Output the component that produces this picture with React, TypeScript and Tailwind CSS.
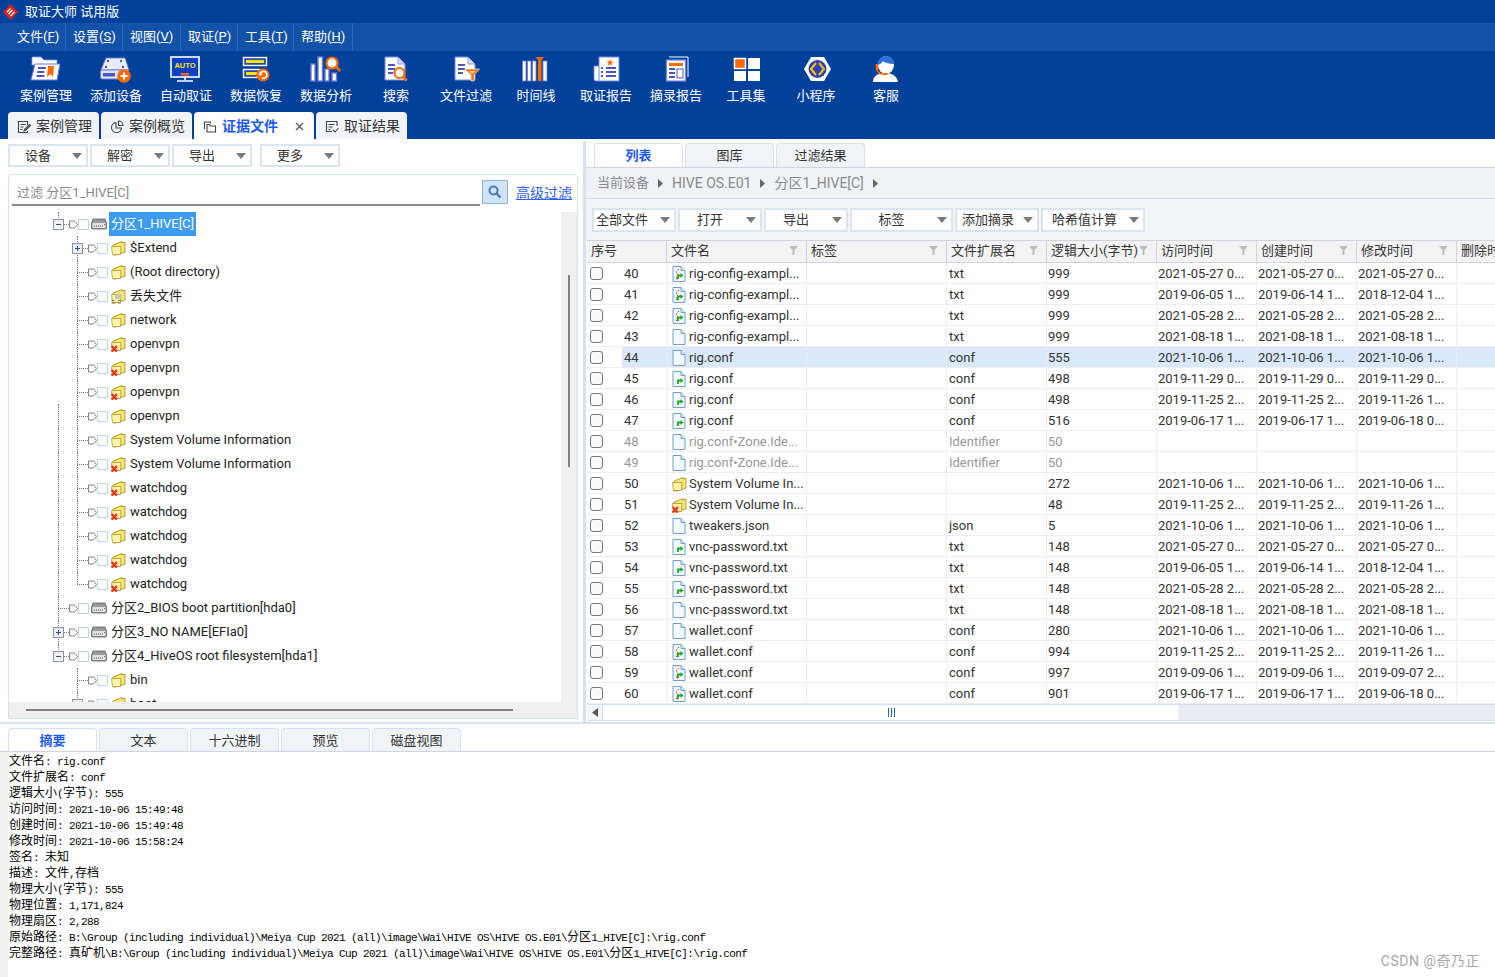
import React from "react";

const INDIGO = "#4a58bd";
const ORANGE = "#ff6a00";

const IconCase = () => (
  <svg width="32" height="28" viewBox="0 0 32 28">
    <path d="M2 2h9l3 3h13v5H2z" fill="#fff" stroke="#8f9be0" strokeWidth="0.8" />
    <path d="M5 9h25l-3 16H1z" fill="#fff" stroke="#6d7bd6" strokeWidth="1" />
    <path d="M8 13h8M7.3 17h7M6.5 21h8" stroke={INDIGO} strokeWidth="2" />
    <path d="M18 11h6l-1 11-2.500-3-3.500 3z" fill={ORANGE} />
  </svg>
);

const IconAdd = () => (
  <svg width="32" height="28" viewBox="0 0 32 28">
    <path d="M6 3h19l4 12H1z" fill="#e9ecfb" stroke="#6d7bd6" strokeWidth="0.8" />
    <g fill={INDIGO}>
      <circle cx="8" cy="6" r="1.200" />
      <circle cx="21" cy="6" r="1.200" />
      <circle cx="6" cy="12" r="1.200" />
      <circle cx="23" cy="12" r="1.200" />
    </g>
    <rect x="0.500" y="15" width="28" height="9" rx="1.500" fill="#dfe3f8" stroke="#6d7bd6" />
    <rect x="3" y="18" width="12" height="3.500" fill={INDIGO} />
    <circle cx="24" cy="21" r="6.800" fill={ORANGE} />
    <path d="M24 17.500v7M20.500 21h7" stroke="#fff" strokeWidth="2" />
  </svg>
);

const IconAuto = () => (
  <svg width="32" height="28" viewBox="0 0 32 28">
    <rect x="1" y="2" width="28" height="20" fill="#0a3fc8" stroke="#fff" strokeWidth="1.600" />
    <text x="15" y="12.500" textAnchor="middle" fontSize="7.500" fontWeight="700" fill="#ffe600" fontFamily="Liberation Sans, sans-serif">AUTO</text>
    <rect x="11" y="18" width="8" height="2.500" fill={ORANGE} />
    <path d="M15 22v3M7 26h16" stroke="#fff" strokeWidth="1.600" />
  </svg>
);

const IconRecover = () => (
  <svg width="32" height="28" viewBox="0 0 32 28">
    <rect x="3.500" y="2.500" width="23" height="8" fill="#2d49b8" stroke="#fff" strokeWidth="1.400" />
    <rect x="6" y="5" width="18" height="3" fill="#ffe600" />
    <rect x="3.500" y="14.500" width="16" height="8" fill="#2d49b8" stroke="#fff" strokeWidth="1.400" />
    <rect x="6" y="17" width="11" height="3" fill="#ffe600" />
    <circle cx="23" cy="20" r="6.500" fill={ORANGE} />
    <path d="M20 19a3.500 3.500 0 1 1 2 4" fill="none" stroke="#fff" strokeWidth="1.800" />
    <path d="M18 18.500h4.500l-2 2.500z" fill="#fff" />
  </svg>
);

const IconAnalysis = () => (
  <svg width="32" height="28" viewBox="0 0 32 28">
    <g fill="#fff" stroke="#6d7bd6" strokeWidth="1.400">
      <rect x="1" y="9" width="4" height="17" />
      <rect x="8" y="2" width="4.500" height="24" />
      <rect x="15" y="14" width="4" height="12" />
      <rect x="22" y="18" width="4.500" height="8" />
    </g>
    <circle cx="22" cy="8" r="5.500" fill="#fff" stroke={ORANGE} strokeWidth="2.200" />
    <path d="M26 12l4.500 4" stroke={ORANGE} strokeWidth="2.400" />
  </svg>
);

const DocBase = () => (
  <>
    <path d="M5 2h13l7 7v16H5z" fill="#fff" stroke="#7a87dc" strokeWidth="1" />
    <path d="M18 2v7h7" fill="#d7dbf6" stroke="#7a87dc" strokeWidth="0.800" />
    <path d="M8 10h7M8 14h7M8 18h5" stroke={INDIGO} strokeWidth="1.800" />
  </>
);

const IconSearch = () => (
  <svg width="32" height="28" viewBox="0 0 32 28">
    <DocBase />
    <circle cx="19.500" cy="18" r="5" fill="#fff" stroke={ORANGE} strokeWidth="2.200" />
    <path d="M23 22l4 3.500" stroke={ORANGE} strokeWidth="2.400" />
  </svg>
);

const IconFilter = () => (
  <svg width="32" height="28" viewBox="0 0 32 28">
    <DocBase />
    <path d="M14.500 14h15l-5.500 6v6h-3v-6z" fill={ORANGE} stroke="#fff" strokeWidth="0.600" />
    <path d="M18.500 16h7l-3.500 3z" fill="#ffd9a8" />
  </svg>
);

const IconTimeline = () => (
  <svg width="32" height="28" viewBox="0 0 32 28">
    <g fill="#fff" stroke="#6d7bd6" strokeWidth="0.800">
      <rect x="2.500" y="6" width="3.500" height="20" />
      <rect x="7.500" y="6" width="3.500" height="20" />
      <rect x="12.500" y="6" width="3.500" height="20" />
      <rect x="23" y="6" width="4" height="20" />
    </g>
    <rect x="18" y="6" width="3.500" height="20" fill={ORANGE} />
    <path d="M15.500 2h8.500l-4.200 5z" fill={ORANGE} />
  </svg>
);

const IconReport = () => (
  <svg width="32" height="28" viewBox="0 0 32 28">
    <path d="M4 11h6v15H6a2 2 0 0 1-2-2z" fill="#fff" stroke="#7a87dc" strokeWidth="0.800" />
    <rect x="9" y="2" width="20" height="24" fill="#fff" stroke="#7a87dc" />
    <path d="M20 4l1 2.500h2.500l-2 1.700.8 2.600-2.300-1.500-2.300 1.500.8-2.600-2-1.700H19z" fill={ORANGE} />
    <path d="M16 13h10M16 17h10M16 21h10M11 13h2M11 17h2M11 21h2" stroke={INDIGO} strokeWidth="1.800" />
  </svg>
);

const IconExcerpt = () => (
  <svg width="32" height="28" viewBox="0 0 32 28">
    <path d="M9 2h19v20" fill="none" stroke="#fff" strokeWidth="1" />
    <rect x="6.500" y="5" width="19" height="21" fill="#fff" stroke="#7a87dc" strokeWidth="1.200" />
    <rect x="9" y="8" width="14" height="3" fill={ORANGE} />
    <path d="M9 14h6M9 18h6M9 22h6" stroke={INDIGO} strokeWidth="1.800" />
    <rect x="17" y="14" width="6" height="9" fill="#fff" stroke={INDIGO} strokeWidth="1" />
  </svg>
);

const IconTools = () => (
  <svg width="32" height="28" viewBox="0 0 32 28">
    <rect x="4.500" y="3.500" width="11" height="10" fill={ORANGE} stroke="#fff" strokeWidth="1.500" />
    <rect x="18" y="3" width="12" height="11" fill="#fff" />
    <rect x="4" y="16" width="12" height="10" fill="#fff" />
    <rect x="18" y="16" width="12" height="10" fill="#fff" />
  </svg>
);

const IconMini = () => (
  <svg width="32" height="28" viewBox="0 0 32 28">
    <path d="M11 2h13l7 12-7 12H11L4 14z" fill="#fff" />
    <circle cx="17.500" cy="14" r="9" fill="#2f3fb5" />
    <path d="M16 8l-5 6 5 6M19 8l5 6-5 6" fill="none" stroke="#ffc400" strokeWidth="2" />
  </svg>
);

const IconSupport = () => (
  <svg width="32" height="28" viewBox="0 0 32 28">
    <path d="M3 27c0-6 5-9 12-9s12 3 13 9z" fill="#fff" />
    <ellipse cx="16" cy="10" rx="8" ry="9" fill="#fff" />
    <path d="M8 10c0-6 4-9 8-9s8 3 8 8c-4 0-9-1-11-3-1 2-3 3-5 4z" fill="#2f6fd8" />
    <path d="M7 9v6" stroke={ORANGE} strokeWidth="2.600" />
    <path d="M7 15c1 3 3 4 7 4" fill="none" stroke={ORANGE} strokeWidth="1.500" />
    <ellipse cx="15.500" cy="19" rx="2.500" ry="1.200" fill={ORANGE} />
  </svg>
);

const tools: [string, React.FC][] = [
  ["案例管理", IconCase],
  ["添加设备", IconAdd],
  ["自动取证", IconAuto],
  ["数据恢复", IconRecover],
  ["数据分析", IconAnalysis],
  ["搜索", IconSearch],
  ["文件过滤", IconFilter],
  ["时间线", IconTimeline],
  ["取证报告", IconReport],
  ["摘录报告", IconExcerpt],
  ["工具集", IconTools],
  ["小程序", IconMini],
  ["客服", IconSupport],
];

const menus: [string, string, string][] = [
  ["文件", "F", "w-[66px] pl-[17px]"],
  ["设置", "S", "w-[57px] pl-[7px]"],
  ["视图", "V", "w-[58px] pl-[7px]"],
  ["取证", "P", "w-[57px] pl-[7px]"],
  ["工具", "T", "w-[56px] pl-[7px]"],
  ["帮助", "H", "w-[59px] pl-[7px]"],
];

const Caret = () => (
  <svg width="10" height="6" viewBox="0 0 10 6" className="shrink-0">
    <path d="M0 0h10L5 6z" fill="#7a7a7a" />
  </svg>
);

const DropButton = ({ label, w, h = "h-[24px]", textClass = "pr-[6px] text-center" }: { label: string; w: string; h?: string; textClass?: string }) => (
  <div className={`flex items-center ${w} ${h} shrink-0 border-2 border-[#dbe4f1] bg-white pr-[4px] text-[#333]`}>
    <span className={`flex-1 ${textClass}`}>{label}</span>
    <Caret />
  </div>
);

const Folder = ({ kind = "folder" }: { kind?: string }) => (
  <svg width="16" height="16" viewBox="0 0 16 16" className="shrink-0">
    <path d="M3 5l9-3.500v1.500l3-1v10l-9 3H3z" fill="#f7e676" stroke="#a88a1e" strokeWidth="0.800" />
    <path d="M1.500 6.500h9.500L10.500 14.500H2.500z" fill="#fff3a6" stroke="#b4942a" strokeWidth="0.800" />
    {kind === "del" && <path d="M1.500 10l5.500 5.500M7 10l-5.500 5.500" stroke="#e53a24" strokeWidth="2.400" />}
    {kind === "lost" && (
      <>
        <path d="M5 6h6v5H5z" fill="#c9c9b8" />
        <path d="M1.500 12.500h3M1.500 15h3M8 15h3M8 12.500h3" stroke="#777" strokeWidth="1.200" />
      </>
    )}
  </svg>
);

const Disk = () => (
  <svg width="16" height="12" viewBox="0 0 16 12" className="shrink-0">
    <path d="M2 1h12l1.500 4v5a1 1 0 0 1-1 1h-13a1 1 0 0 1-1-1V5z" fill="#9a9a9a" stroke="#5c5c5c" strokeWidth="0.800" />
    <rect x="1.500" y="5" width="13" height="5" fill="#e3e3e3" />
    <path d="M3 8h1M5 8h1M7 8h1M9 8h1M11 8h1" stroke="#444" strokeWidth="1" />
    <rect x="13" y="6" width="1" height="1" fill="#2d9c2d" />
  </svg>
);

const Expander = ({ sign }: { sign: "+" | "-" }) => (
  <svg width="11" height="11" viewBox="0 0 11 11" className="relative shrink-0">
    <rect x="0.500" y="0.500" width="10" height="10" fill="#eef1f6" stroke="#8c93a3" />
    <path d={sign === "+" ? "M3 5.500h5M5.500 3v5" : "M3 5.500h5"} stroke={sign === "+" ? "#2b4ea8" : "#4a5161"} />
  </svg>
);

const Tag = () => (
  <svg width="9" height="9" viewBox="0 0 9 9" className="shrink-0">
    <path d="M0.500 1h5l3 3.500-3 3.500h-5z" fill="#fff" stroke="#808080" />
  </svg>
);

type TreeItem = {
  level: 1 | 2;
  text: string;
  sign?: "+" | "-";
  kind?: string;
  selected?: boolean;
  a?: "full" | "top";
  b?: "full" | "top";
};

const treeItems: TreeItem[] = [
  { level: 1, text: "分区1_HIVE[C]", sign: "-", selected: true, a: "top" },
  { level: 2, text: "$Extend", sign: "+", kind: "folder", b: "full" },
  { level: 2, text: "(Root directory)", kind: "folder", b: "full" },
  { level: 2, text: "丢失文件", kind: "lost", b: "full" },
  { level: 2, text: "network", kind: "folder", b: "full" },
  { level: 2, text: "openvpn", kind: "del", b: "full" },
  { level: 2, text: "openvpn", kind: "del", b: "full" },
  { level: 2, text: "openvpn", kind: "del", b: "full" },
  { level: 2, text: "openvpn", kind: "folder", a: "full", b: "full" },
  { level: 2, text: "System Volume Information", kind: "folder", a: "full", b: "full" },
  { level: 2, text: "System Volume Information", kind: "del", a: "full", b: "full" },
  { level: 2, text: "watchdog", kind: "del", a: "full", b: "full" },
  { level: 2, text: "watchdog", kind: "del", a: "full", b: "full" },
  { level: 2, text: "watchdog", kind: "folder", a: "full", b: "full" },
  { level: 2, text: "watchdog", kind: "del", a: "full", b: "full" },
  { level: 2, text: "watchdog", kind: "del", a: "full", b: "top" },
  { level: 1, text: "分区2_BIOS boot partition[hda0]", a: "full" },
  { level: 1, text: "分区3_NO NAME[EFIa0]", sign: "+", a: "full" },
  { level: 1, text: "分区4_HiveOS root filesystem[hda1]", sign: "-", a: "top" },
  { level: 2, text: "bin", kind: "folder", b: "full" },
  { level: 2, text: "boot", sign: "+", kind: "folder", b: "full" },
];

const Guide = ({ left, mode }: { left: string; mode: "full" | "top" }) => (
  <span className={`absolute top-0 ${left} ${mode === "full" ? "h-full" : "h-1/2"} border-l border-dotted border-[#777]`} />
);

const TreeRow = ({ item }: { item: TreeItem }) => (
  <div className={`relative flex h-6 shrink-0 items-center ${item.level === 1 ? "pl-[44px]" : "pl-[63px]"}`}>
    {item.a && <Guide left="left-[49px]" mode={item.a} />}
    {item.b && <Guide left="left-[68px]" mode={item.b} />}
    {item.sign ? (
      <>
        <Expander sign={item.sign} />
        <span className="w-[5px] border-t border-dotted border-[#777]" />
      </>
    ) : (
      <span className="ml-[5px] w-[11px] border-t border-dotted border-[#777]" />
    )}
    <Tag />
    <span className="h-[11px] w-[11px] shrink-0 border border-[#bcd0f5] bg-white" />
    <span className="ml-[2px] flex w-[16px] justify-center">{item.level === 1 ? <Disk /> : <Folder kind={item.kind} />}</span>
    {item.selected ? (
      <span className="ml-[2px] flex h-6 items-center bg-[#3d9bf2] px-[2px] text-white">{item.text}</span>
    ) : (
      <span className="ml-[4px] text-[#222]">{item.text}</span>
    )}
  </div>
);

const FileIcon = ({ kind }: { kind: string }) => {
  if (kind === "folder" || kind === "del") {
    return (
      <span className="-mx-px flex shrink-0">
        <Folder kind={kind} />
      </span>
    );
  }
  return (
    <svg width="14" height="16" viewBox="0 0 14 16" className="shrink-0">
      <path d="M1 0.500h8l4 4v11H1z" fill="#f4f9ff" stroke="#6f9fcf" />
      <path d="M9 0.500v4h4" fill="#d6e6f7" stroke="#6f9fcf" />
      {kind === "rg" && <path d="M7 3L4 6l2 3-2 3 2 2" fill="none" stroke="#e5352b" strokeWidth="1" strokeDasharray="1.500 0.800" />}
      {(kind === "g" || kind === "rg") && (
        <>
          <path d="M6 13V9.500h3" fill="none" stroke="#1fa81f" strokeWidth="1.800" />
          <path d="M8.500 7l3 2.500-3 2.500z" fill="#1fa81f" />
        </>
      )}
    </svg>
  );
};

type Row = [number, string, string, string, string, string, string, string, boolean?];

const rows: Row[] = [
  [40, "rg", "rig-config-exampl...", "txt", "999", "2021-05-27 0...", "2021-05-27 0...", "2021-05-27 0..."],
  [41, "rg", "rig-config-exampl...", "txt", "999", "2019-06-05 1...", "2019-06-14 1...", "2018-12-04 1..."],
  [42, "rg", "rig-config-exampl...", "txt", "999", "2021-05-28 2...", "2021-05-28 2...", "2021-05-28 2..."],
  [43, "doc", "rig-config-exampl...", "txt", "999", "2021-08-18 1...", "2021-08-18 1...", "2021-08-18 1..."],
  [44, "doc", "rig.conf", "conf", "555", "2021-10-06 1...", "2021-10-06 1...", "2021-10-06 1..."],
  [45, "g", "rig.conf", "conf", "498", "2019-11-29 0...", "2019-11-29 0...", "2019-11-29 0..."],
  [46, "g", "rig.conf", "conf", "498", "2019-11-25 2...", "2019-11-25 2...", "2019-11-26 1..."],
  [47, "g", "rig.conf", "conf", "516", "2019-06-17 1...", "2019-06-17 1...", "2019-06-18 0..."],
  [48, "doc", "rig.conf•Zone.Ide...", "Identifier", "50", "", "", "", true],
  [49, "doc", "rig.conf•Zone.Ide...", "Identifier", "50", "", "", "", true],
  [50, "folder", "System Volume In...", "", "272", "2021-10-06 1...", "2021-10-06 1...", "2021-10-06 1..."],
  [51, "del", "System Volume In...", "", "48", "2019-11-25 2...", "2019-11-25 2...", "2019-11-26 1..."],
  [52, "doc", "tweakers.json", "json", "5", "2021-10-06 1...", "2021-10-06 1...", "2021-10-06 1..."],
  [53, "g", "vnc-password.txt", "txt", "148", "2021-05-27 0...", "2021-05-27 0...", "2021-05-27 0..."],
  [54, "g", "vnc-password.txt", "txt", "148", "2019-06-05 1...", "2019-06-14 1...", "2018-12-04 1..."],
  [55, "g", "vnc-password.txt", "txt", "148", "2021-05-28 2...", "2021-05-28 2...", "2021-05-28 2..."],
  [56, "doc", "vnc-password.txt", "txt", "148", "2021-08-18 1...", "2021-08-18 1...", "2021-08-18 1..."],
  [57, "doc", "wallet.conf", "conf", "280", "2021-10-06 1...", "2021-10-06 1...", "2021-10-06 1..."],
  [58, "rg", "wallet.conf", "conf", "994", "2019-11-25 2...", "2019-11-25 2...", "2019-11-26 1..."],
  [59, "rg", "wallet.conf", "conf", "997", "2019-09-06 1...", "2019-09-06 1...", "2019-09-07 2..."],
  [60, "rg", "wallet.conf", "conf", "901", "2019-06-17 1...", "2019-06-17 1...", "2019-06-18 0..."],
];

const headers: [string, string][] = [
  ["序号", "w-[80px]"],
  ["文件名", "w-[140px]"],
  ["标签", "w-[140px]"],
  ["文件扩展名", "w-[100px]"],
  ["逻辑大小(字节)", "w-[110px]"],
  ["访问时间", "w-[100px]"],
  ["创建时间", "w-[100px]"],
  ["修改时间", "w-[100px]"],
  ["删除时间", "w-[100px]"],
];

const Funnel = () => (
  <svg width="9" height="9" viewBox="0 0 9 9" className="absolute right-[8px] top-[5px]">
    <path d="M0 0h9L5.500 4v5h-2V4z" fill="#bdbdbd" />
  </svg>
);

const summary = [
  "文件名: rig.conf",
  "文件扩展名: conf",
  "逻辑大小(字节): 555",
  "访问时间: 2021-10-06 15:49:48",
  "创建时间: 2021-10-06 15:49:48",
  "修改时间: 2021-10-06 15:58:24",
  "签名: 未知",
  "描述: 文件,存档",
  "物理大小(字节): 555",
  "物理位置: 1,171,824",
  "物理扇区: 2,288",
  "原始路径: B:\\Group (including individual)\\Meiya Cup 2021 (all)\\image\\Wai\\HIVE OS\\HIVE OS.E01\\分区1_HIVE[C]:\\rig.conf",
  "完整路径: 真矿机\\B:\\Group (including individual)\\Meiya Cup 2021 (all)\\image\\Wai\\HIVE OS\\HIVE OS.E01\\分区1_HIVE[C]:\\rig.conf",
];

// cjk runs stay 12px, latin runs get a 6px advance like the original bitmap font
const SummaryLine = ({ text }: { text: string }) => (
  <div className="h-4 whitespace-pre leading-4 text-black">
    {text.split(/([\u4e00-\u9fff]+)/).map((part, i) =>
      /[\u4e00-\u9fff]/.test(part) ? (
        <span key={i} className="text-[12px]">{part}</span>
      ) : (
        <span key={i} className="[font-family:'Liberation_Mono',monospace] text-[11px] tracking-[-0.6px]">{part}</span>
      )
    )}
  </div>
);

const TabShape = ({ label, w, active, h = "h-[24px]" }: { label: string; w: string; active?: boolean; h?: string }) => (
  <div
    className={`flex ${h} ${w} shrink-0 items-center justify-center rounded-t-[4px] border border-b-0 border-[#d5e0f0] pt-px ${
      active ? "bg-white font-bold text-[#1d5bf0]" : "bg-[#f0f3f8] text-[#333]"
    }`}
  >
    {label}
  </div>
);

const TopTab = ({ label, w, active, close, icon }: { label: string; w: string; active?: boolean; close?: boolean; icon: React.ReactNode }) => (
  <div
    className={`flex h-[27px] ${w} shrink-0 items-center rounded-t-[4px] pl-[9px] pt-[2px] text-[14px] ${
      active ? "bg-white font-bold text-[#1d5bf0]" : "bg-[#f0f3f8] text-[#333]"
    }`}
  >
    <span className="mr-[5px] flex w-[14px] justify-center">{icon}</span>
    <span>{label}</span>
    {close && (
      <svg width="9" height="9" viewBox="0 0 9 9" className="ml-[17px]">
        <path d="M1 1l7 7M8 1L1 8" stroke="#555" strokeWidth="1.200" />
      </svg>
    )}
  </div>
);

const EditIcon = () => (
  <svg width="14" height="14" viewBox="0 0 14 14" fill="none" stroke="#444" strokeWidth="1.100">
    <path d="M10.500 5V1.500h-9v11h9V11M3.500 4.500h5M3.500 7h3M3.500 9.500h2" />
    <path d="M7.500 9.500l5-5 1 1-5 5-1.500.5z" />
  </svg>
);
const PieIcon = () => (
  <svg width="14" height="14" viewBox="0 0 14 14" fill="none" stroke="#444" strokeWidth="1.100">
    <path d="M6 2.500a5 5 0 1 0 5.500 5.500H6z" />
    <path d="M8.500 1a4.500 4.500 0 0 1 4.500 4.500H8.500z" />
  </svg>
);
const FilesIcon = () => (
  <svg width="14" height="14" viewBox="0 0 14 14" fill="none" stroke="#444" strokeWidth="1.100">
    <path d="M1.500 9V2h6v1.500" />
    <path d="M4 12V4.500h2.500l1 1.500h5v6z" />
  </svg>
);
const ResultIcon = () => (
  <svg width="14" height="14" viewBox="0 0 14 14" fill="none" stroke="#444" strokeWidth="1.100">
    <path d="M12 6V1.500H1.500v10H7M3.500 4.500h6M3.500 7h4M3.500 9.500h2" />
    <path d="M8 10l2 2 3.500-4" />
  </svg>
);

const Crumb = () => (
  <svg width="5" height="9" viewBox="0 0 5 9" className="shrink-0">
    <path d="M0 0l5 4.500L0 9z" fill="#666" />
  </svg>
);

export default function App() {
  return (
    <div className="relative flex h-screen w-full flex-col overflow-hidden bg-white text-[13px] [font-family:'Roboto','Noto_Sans_CJK_SC',sans-serif]">
      {/* title bar */}
      <div className="flex h-[23px] shrink-0 items-center bg-[#01419b] pl-[3px] text-white">
        <svg width="15" height="16" viewBox="0 0 15 16">
          <path d="M7.500 0l7.500 8-7.500 8L0 8z" fill="#d8261c" />
          <path d="M4 8l3.500-3.500M5.500 10l4-4M7.500 12l4-4" stroke="#fff" strokeWidth="1.300" />
        </svg>
        <span className="ml-[7px]">取证大师 试用版</span>
      </div>

      {/* menu bar */}
      <div className="flex h-[28px] shrink-0 items-center bg-[#1352a9] text-white">
        {menus.map(([name, key, cls]) => (
          <div key={key} className={`flex h-full items-center border-r border-[#2f68b8] ${cls}`}>
            {name}(<span className="underline">{key}</span>)
          </div>
        ))}
      </div>

      {/* main toolbar */}
      <div className="shrink-0 bg-[#01419b]">
        <div className="flex h-[61px] pl-[11px]">
          {tools.map(([label, Icon]) => (
            <div key={label} className="flex w-[70px] flex-col items-center pt-[4px] text-white">
              <Icon />
              <span className="mt-[3px] leading-[20px]">{label}</span>
            </div>
          ))}
        </div>
        <div className="flex h-[27px] gap-[2px] pl-[8px]">
          <TopTab label="案例管理" w="w-[91px]" icon={<EditIcon />} />
          <TopTab label="案例概览" w="w-[91px]" icon={<PieIcon />} />
          <TopTab label="证据文件" w="w-[120px]" active close icon={<FilesIcon />} />
          <TopTab label="取证结果" w="w-[91px]" icon={<ResultIcon />} />
        </div>
      </div>

      {/* upper workspace */}
      <div className="flex h-[583px] shrink-0">
        <div className="flex w-[583px] shrink-0 flex-col">
          <div className="ml-[8px] mt-[5px] flex gap-[2px]">
            <DropButton label="设备" w="w-[80px]" h="h-[23px]" />
            <DropButton label="解密" w="w-[80px]" h="h-[23px]" />
            <DropButton label="导出" w="w-[80px]" h="h-[23px]" />
            <DropButton label="更多" w="ml-[6px] w-[80px]" h="h-[23px]" />
          </div>
          <div className="ml-[8px] mt-[7px] flex h-[545px] w-[570px] flex-col rounded-t-[4px] border border-[#d5e0f0]">
            <div className="flex h-[32px] shrink-0 items-start pl-[3px] pt-[5px]">
              <div className="flex h-[26px] w-[468px] items-center border-b-2 border-[#8c8c8c] pl-[5px] pt-px text-[#8a8a8a]">过滤 分区1_HIVE[C]</div>
              <div className="ml-[2px] flex h-[24px] w-[26px] items-center justify-center border border-[#8eb4dc] bg-[#cfe3fb]">
                <svg width="14" height="14" viewBox="0 0 14 14">
                  <circle cx="5.500" cy="5.500" r="4" fill="none" stroke="#4a7ab0" strokeWidth="2" />
                  <path d="M8.500 8.500l4 4" stroke="#4a7ab0" strokeWidth="2.400" />
                </svg>
              </div>
              <span className="ml-[8px] mt-[3px] text-[14px] text-[#2f62e8] underline">高级过滤</span>
            </div>
            <div className="flex h-[495px] shrink-0">
              <div className="flex h-full w-[552px] shrink-0 flex-col overflow-hidden pt-[5px]">
                {treeItems.map((item, i) => (
                  <TreeRow key={i} item={item} />
                ))}
              </div>
              <div className="mt-[5px] w-[16px] bg-[#f0f0f0] pl-[7px] pt-[63px]">
                <div className="h-[192px] w-[2px] bg-[#808080]" />
              </div>
            </div>
            <div className="h-[16px] shrink-0 bg-[#f0f0f0] pl-[17px] pt-[7px]">
              <div className="h-[2px] w-[487px] bg-[#808080]" />
            </div>
          </div>
        </div>

        <div className="mt-[2px] w-[3px] shrink-0 bg-[#d5e0f0]" />

        <div className="flex min-w-0 flex-1 flex-col">
          <div className="flex h-[29px] shrink-0 items-end gap-[2px] border-b border-[#cfd3e3] pl-[8px]">
            <TabShape label="列表" w="w-[89px]" active />
            <TabShape label="图库" w="w-[89px]" />
            <TabShape label="过滤结果" w="w-[89px]" />
          </div>
          <div className="flex h-[31px] shrink-0 items-center gap-[9px] border-b border-[#d5e0f0] bg-[#eff2f7] pl-[11px] text-[14px] text-[#8a8a8a]">
            <span className="text-[13px]">当前设备</span>
            <Crumb />
            <span>HIVE OS.E01</span>
            <Crumb />
            <span>分区1_HIVE[C]</span>
            <Crumb />
          </div>
          <div className="flex h-[41px] shrink-0 items-center gap-[2px] bg-[#f2f5fa] pl-[6px]">
            <DropButton label="全部文件" w="w-[84px]" textClass="pl-[2px] text-left" />
            <DropButton label="打开" w="w-[84px]" />
            <DropButton label="导出" w="w-[84px]" />
            <DropButton label="标签" w="w-[103px]" />
            <DropButton label="添加摘录" w="w-[84px]" textClass="pl-[5px] text-left" />
            <DropButton label="哈希值计算" w="w-[104px]" textClass="pl-[9px] text-left" />
          </div>

          <div className="ml-px flex h-[23px] shrink-0 border-y border-[#d0d3df] bg-[#f3f3f3] text-[#333]">
            {headers.map(([name, w], i) => (
              <div key={name} className={`relative ${w} shrink-0 overflow-hidden whitespace-nowrap border-r border-[#cfd3e3] pl-[4px] leading-[20px]`}>
                {name}
                {i > 0 && <Funnel />}
              </div>
            ))}
          </div>

          <div className="ml-px shrink-0">
            {rows.map(([num, kind, name, ext, size, atime, ctime, mtime, muted]) => {
              const selected = num === 44;
              return (
                <div
                  key={num}
                  className={`flex h-[21px] items-center whitespace-nowrap border-b border-[#eeeeee] ${muted ? "text-[#999]" : "text-[#333]"}`}
                >
                  <div className="flex h-full w-[35px] shrink-0 items-center pl-[3px] pt-px">
                    <span className="h-[13px] w-[13px] rounded-[3px] border-[1.5px] border-[#777] bg-[#fafafa]" />
                  </div>
                  <div className={`flex h-full w-[45px] shrink-0 items-center pl-[2px] pt-px ${selected ? "bg-[#d9e8fb]" : ""}`}>{num}</div>
                  <div className={`flex h-full w-[140px] shrink-0 items-center gap-[3px] border-x border-[#eeeeee] pl-[4px] pt-px ${selected ? "bg-[#d9e8fb]" : ""}`}>
                    <FileIcon kind={kind} />
                    <span>{name}</span>
                  </div>
                  <div className={`h-full w-[140px] shrink-0 border-r border-[#eeeeee] ${selected ? "bg-[#d9e8fb]" : ""}`} />
                  {[
                    [ext, "w-[100px] pl-[2px]"],
                    [size, "w-[110px] pl-[1px]"],
                    [atime, "w-[100px] pl-[1px]"],
                    [ctime, "w-[100px] pl-[1px]"],
                    [mtime, "w-[100px] pl-[1px]"],
                    ["", "w-[100px]"],
                  ].map(([value, cls], i) => (
                    <div key={i} className={`flex h-full shrink-0 items-center border-r border-[#eeeeee] pt-px ${cls} ${selected ? "bg-[#d9e8fb]" : ""}`}>
                      {value}
                    </div>
                  ))}
                </div>
              );
            })}
          </div>

          <div className="ml-px flex h-[17px] shrink-0 border-y border-[#d5e0f0] bg-[#e8edf5]">
            <div className="flex w-[16px] shrink-0 items-center justify-center border-r border-[#d5e0f0] bg-[#f2f5fa]">
              <svg width="6" height="9" viewBox="0 0 6 9">
                <path d="M6 0v9L0 4.500z" fill="#555" />
              </svg>
            </div>
            <div className="flex w-[575px] shrink-0 items-center justify-center gap-[1px] bg-white pl-[2px]">
              <span className="h-[9px] w-px bg-[#2f5fa8]" />
              <span className="ml-px h-[9px] w-px bg-[#2f5fa8]" />
              <span className="ml-px h-[9px] w-px bg-[#2f5fa8]" />
            </div>
          </div>
        </div>
      </div>

      {/* lower pane */}
      <div className="h-[2px] shrink-0 bg-[#d5e0f0]" />
      <div className="flex h-[28px] shrink-0 items-end gap-[2px] border-b border-[#cfd3e3] pl-[8px]">
        <TabShape label="摘要" w="w-[89px]" h="h-[23px]" active />
        <TabShape label="文本" w="w-[89px]" h="h-[23px]" />
        <TabShape label="十六进制" w="w-[89px]" h="h-[23px]" />
        <TabShape label="预览" w="w-[89px]" h="h-[23px]" />
        <TabShape label="磁盘视图" w="w-[89px]" h="h-[23px]" />
      </div>
      <div className="flex min-h-0 flex-1">
        <div className="w-[8px] shrink-0 bg-[#f0f0f0]" />
        <div className="flex-1 pl-px pt-px">
          {summary.map((line) => (
            <SummaryLine key={line} text={line} />
          ))}
        </div>
      </div>

      <div className="absolute bottom-[5px] right-[15px] text-[14px] tracking-[0.5px] text-[#a8a8a8]">CSDN @奇乃正</div>
    </div>
  );
}
